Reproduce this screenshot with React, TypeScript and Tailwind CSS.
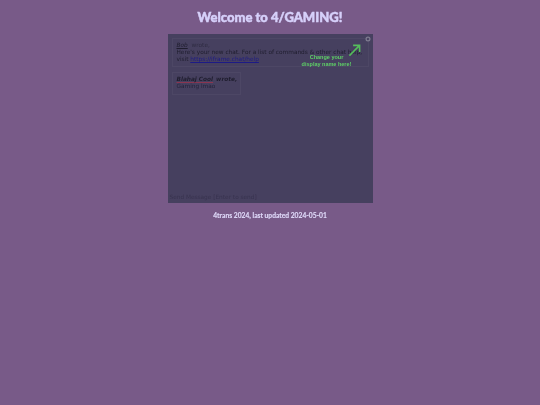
export default function App() {
  return (
    <div className="flex min-h-[405px] flex-col items-center bg-[#785a88] pt-[9px] font-['Lato',sans-serif]">
      <h1 className="h-[25px] text-[13px] leading-[16px] font-black text-[#d6d0fa] [-webkit-text-stroke:0.5px_#d6d0fa] blur-[0.3px]">Welcome to 4/GAMING!</h1>

      {/* chat embed */}
      <div className="relative flex h-[169px] w-[205px] flex-col justify-between bg-[#46405f] font-['DejaVu_Sans',sans-serif] text-[5.8px] leading-[7px] whitespace-nowrap text-[#1f1d2e] blur-[0.25px]">
        <div className="flex flex-col items-start gap-[5px] px-[4px] pt-[4px]">
          <div className="h-[29px] w-[197px] border border-[#4d4765] px-[4px] pt-[3px]">
            <p><span className="italic underline">Bob</span> <span className="ml-[2px] text-[#2f2b42]">wrote,</span></p>
            <p>Here's your new chat. For a list of commands &amp; other chat help,</p>
            <p>visit <a href="#" className="text-[#1d1a86] underline">https://iframe.chat/help</a></p>
          </div>
          <div className="h-[23px] w-[69px] border border-[#4d4765] px-[4px] pt-[3px]">
            <p className="font-bold italic"><span className="underline decoration-[#8a3550]">Blahaj Cool</span> <span className="ml-[1px] text-[#1f1d2e]">wrote,</span></p>
            <p className="text-[#24223a]">Gaming lmao</p>
          </div>
        </div>
        <p className="px-[2px] pb-[2px] text-[#38334f]">Send Message [Enter to send]</p>

        {/* settings gear */}
        <svg viewBox="0 0 10 10" className="absolute top-[2px] right-[2px] h-[6px] w-[6px]">
          <circle cx="5" cy="5" r="3.2" fill="none" stroke="#7f7c91" strokeWidth="2" />
        </svg>

        {/* display name hint */}
        <svg viewBox="0 0 14 14" className="absolute top-[10px] right-[12px] h-[13px] w-[13px]">
          <path d="M1.5 12.5 12.5 1.5M5.5 1.5h7v7" fill="none" stroke="#55bd5c" strokeWidth="1.7" />
        </svg>
        <p className="absolute top-[20px] right-[16px] w-[60px] text-center font-['Liberation_Sans',sans-serif] text-[5.5px] leading-[6.5px] font-bold text-[#5fd067]">
          Change your<br />display name here!
        </p>
      </div>

      <p className="mt-[8px] text-[6.7px] leading-[9px] font-bold text-[#ded8f8] [-webkit-text-stroke:0.15px_#ded8f8] blur-[0.2px]">4trans 2024, last updated 2024-05-01</p>
    </div>
  );
}
